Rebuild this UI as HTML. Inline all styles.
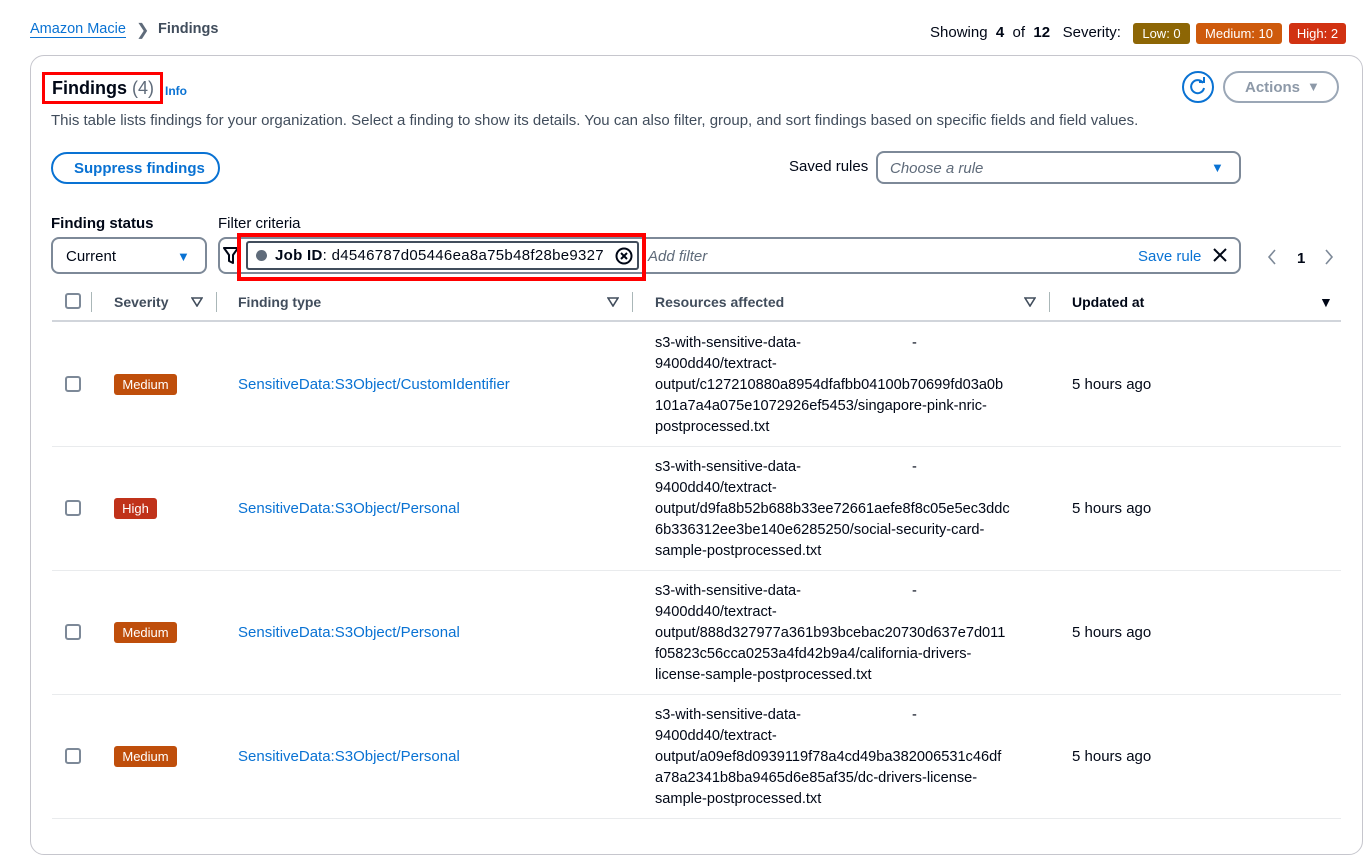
<!DOCTYPE html>
<html><head><meta charset="utf-8">
<style>
*{margin:0;padding:0;box-sizing:border-box}
body{width:1372px;height:819px;background:#fff;font-family:"Liberation Sans",sans-serif;color:#000716;position:relative;overflow:hidden;font-size:15px}
.a{position:absolute;white-space:nowrap}
.link{color:#0972d3}
.badge{position:absolute;color:#fff;font-size:13px;border-radius:3px;height:21px;line-height:21px;text-align:center}
.cb{position:absolute;width:16px;height:16px;border:2px solid #7d8998;border-radius:3px;background:#fff}
.sep{position:absolute;width:1px;height:20px;background:#aab7b8}
.hr{position:absolute;left:52px;width:1289px;height:1px;background:#e9ebed}
.res{position:absolute;left:655px;font-size:14.6px;line-height:21px;color:#000716;white-space:nowrap}
.b{font-weight:bold}
.h{font-size:14px}
</style></head><body>
<div class="a link" style="left:30px;top:21px;font-size:14.5px;border-bottom:1px solid #0972d3;line-height:16px">Amazon Macie</div>
<div class="a" style="left:136px;top:20px;color:#5f6b7a;font-size:16px">&#x276F;</div>
<div class="a b" style="left:158px;top:21px;color:#414d5c;font-size:14.5px">Findings</div>

<div class="a" style="left:930px;top:24px;font-size:15px">Showing&nbsp; <b>4</b> &nbsp;of&nbsp; <b>12</b> &nbsp;&nbsp;Severity:</div>
<div class="badge" style="left:1133px;top:23px;width:57px;background:#8d6605">Low: 0</div>
<div class="badge" style="left:1196px;top:23px;width:86px;background:#ce5a0c">Medium: 10</div>
<div class="badge" style="left:1289px;top:23px;width:57px;background:#d13212">High: 2</div>

<div style="position:absolute;left:30px;top:55px;width:1333px;height:800px;border:1px solid #c6c6cd;border-radius:14px"></div>

<div class="a" style="left:42px;top:72px;width:121px;height:32px;border:3px solid #f00"></div>
<div class="a b" style="left:52px;top:78px;font-size:18px">Findings <span style="font-weight:normal;color:#5f6b7a">(4)</span></div>
<div class="a link b" style="left:165px;top:84px;font-size:12px">Info</div>
<div class="a" style="left:51px;top:112px;font-size:15px;color:#414d5c">This table lists findings for your organization. Select a finding to show its details. You can also filter, group, and sort findings based on specific fields and field values.</div>

<div class="a" style="left:1182px;top:71px;width:32px;height:32px;border:2px solid #0972d3;border-radius:50%"></div>
<svg class="a" style="left:1188px;top:77px" width="20" height="20" viewBox="0 0 20 20"><path d="M15 6 A6.5 6.5 0 1 0 16 11" fill="none" stroke="#0972d3" stroke-width="2"/><path d="M11 5 L16 5 L16 0" fill="none" stroke="#0972d3" stroke-width="2"/></svg>
<div class="a" style="left:1223px;top:71px;width:116px;height:32px;border:2px solid #9ba7b6;border-radius:16px"></div>
<div class="a b" style="left:1245px;top:79px;color:#8d99a8;font-size:15px">Actions</div>
<div class="a" style="left:1307px;top:79px;color:#8d99a8;font-size:13px">&#9660;</div>

<div class="a" style="left:51px;top:152px;width:169px;height:32px;border:2px solid #0972d3;border-radius:16px"></div>
<div class="a b link" style="left:74px;top:160px;font-size:15px">Suppress findings</div>

<div class="a" style="left:789px;top:158px">Saved rules</div>
<div class="a" style="left:876px;top:151px;width:365px;height:33px;border:2px solid #7d8998;border-radius:8px"></div>
<div class="a" style="left:890px;top:160px;font-style:italic;color:#5f6b7a">Choose a rule</div>
<div class="a" style="left:1211px;top:160px;color:#0972d3;font-size:13px">&#9660;</div>

<div class="a b" style="left:51px;top:215px">Finding status</div>
<div class="a" style="left:218px;top:215px;color:#000716">Filter criteria</div>
<div class="a" style="left:51px;top:237px;width:156px;height:37px;border:2px solid #7d8998;border-radius:8px"></div>
<div class="a" style="left:66px;top:248px">Current</div>
<div class="a" style="left:177px;top:249px;color:#0972d3;font-size:13px">&#9660;</div>

<div class="a" style="left:218px;top:237px;width:1023px;height:37px;border:2px solid #7d8998;border-radius:8px"></div>
<svg class="a" style="left:223px;top:247px" width="16" height="18" viewBox="0 0 16 18"><path d="M1 1 H15 L10 8 V16 L6 14 V8 Z" fill="none" stroke="#000716" stroke-width="2" stroke-linejoin="round"/></svg>
<div class="a" style="left:246px;top:241px;width:393px;height:29px;border:2px solid #414d5c;border-radius:3px"></div>
<div class="a" style="left:237px;top:233px;width:409px;height:48px;border:4px solid #f00"></div>
<div class="a" style="left:256px;top:250px;width:11px;height:11px;border-radius:50%;background:#5f6b7a"></div>
<div class="a" style="left:275px;top:247px;font-size:15px;letter-spacing:0.3px"><b>Job ID</b>: d4546787d05446ea8a75b48f28be9327</div>
<svg class="a" style="left:614px;top:246px" width="20" height="20" viewBox="0 0 20 20"><circle cx="10" cy="10" r="7.5" fill="none" stroke="#000716" stroke-width="2"/><path d="M7 7 L13 13 M13 7 L7 13" stroke="#000716" stroke-width="2"/></svg>
<div class="a" style="left:648px;top:248px;font-style:italic;color:#5f6b7a">Add filter</div>
<div class="a link" style="left:1138px;top:248px">Save rule</div>
<svg class="a" style="left:1212px;top:247px" width="16" height="16" viewBox="0 0 16 16"><path d="M2 2 L14 14 M14 2 L2 14" stroke="#000716" stroke-width="2"/></svg>
<svg class="a" style="left:1266px;top:249px" width="12" height="16" viewBox="0 0 12 16"><path d="M9 1 L3 8 L9 15" fill="none" stroke="#7d8998" stroke-width="1.6"/></svg>
<div class="a b" style="left:1297px;top:250px">1</div>
<svg class="a" style="left:1323px;top:249px" width="12" height="16" viewBox="0 0 12 16"><path d="M3 1 L9 8 L3 15" fill="none" stroke="#7d8998" stroke-width="1.6"/></svg>

<!-- header -->
<div class="cb" style="left:65px;top:293px"></div>
<div class="sep" style="left:91px;top:292px"></div>
<div class="a b h" style="left:114px;top:294px;color:#414d5c">Severity</div>
<svg class="a" style="left:191px;top:297px" width="12" height="10" viewBox="0 0 12 10"><path d="M1 1 H11 L6 9 Z" fill="none" stroke="#414d5c" stroke-width="1.6"/></svg>
<div class="sep" style="left:216px;top:292px"></div>
<div class="a b h" style="left:238px;top:294px;color:#414d5c">Finding type</div>
<svg class="a" style="left:607px;top:297px" width="12" height="10" viewBox="0 0 12 10"><path d="M1 1 H11 L6 9 Z" fill="none" stroke="#414d5c" stroke-width="1.6"/></svg>
<div class="sep" style="left:632px;top:292px"></div>
<div class="a b h" style="left:655px;top:294px;color:#414d5c">Resources affected</div>
<svg class="a" style="left:1024px;top:297px" width="12" height="10" viewBox="0 0 12 10"><path d="M1 1 H11 L6 9 Z" fill="none" stroke="#414d5c" stroke-width="1.6"/></svg>
<div class="sep" style="left:1049px;top:292px"></div>
<div class="a b h" style="left:1072px;top:294px">Updated at</div>
<div class="a" style="left:1319px;top:294px;font-size:14px">&#9660;</div>
<div class="hr" style="top:320px;height:2px;background:#d1d5db"></div>

<!-- row 1 -->
<div class="cb" style="left:65px;top:376px"></div>
<div class="badge" style="left:114px;top:374px;width:63px;background:#bf4e0b">Medium</div>
<div class="a link" style="left:238px;top:376px">SensitiveData:S3Object/CustomIdentifier</div>
<div class="res" style="top:333px">s3-with-sensitive-data-<span style="position:absolute;left:257px">-</span><br>9400dd40/textract-<br>output/c127210880a8954dfafbb04100b70699fd03a0b<br>101a7a4a075e1072926ef5453/singapore-pink-nric-<br>postprocessed.txt</div>
<div class="a" style="left:1072px;top:376px">5 hours ago</div>
<div class="hr" style="top:446px"></div>

<!-- row 2 -->
<div class="cb" style="left:65px;top:500px"></div>
<div class="badge" style="left:114px;top:498px;width:43px;background:#c0321a">High</div>
<div class="a link" style="left:238px;top:500px">SensitiveData:S3Object/Personal</div>
<div class="res" style="top:457px">s3-with-sensitive-data-<span style="position:absolute;left:257px">-</span><br>9400dd40/textract-<br>output/d9fa8b52b688b33ee72661aefe8f8c05e5ec3ddc<br>6b336312ee3be140e6285250/social-security-card-<br>sample-postprocessed.txt</div>
<div class="a" style="left:1072px;top:500px">5 hours ago</div>
<div class="hr" style="top:570px"></div>

<!-- row 3 -->
<div class="cb" style="left:65px;top:624px"></div>
<div class="badge" style="left:114px;top:622px;width:63px;background:#bf4e0b">Medium</div>
<div class="a link" style="left:238px;top:624px">SensitiveData:S3Object/Personal</div>
<div class="res" style="top:581px">s3-with-sensitive-data-<span style="position:absolute;left:257px">-</span><br>9400dd40/textract-<br>output/888d327977a361b93bcebac20730d637e7d011<br>f05823c56cca0253a4fd42b9a4/california-drivers-<br>license-sample-postprocessed.txt</div>
<div class="a" style="left:1072px;top:624px">5 hours ago</div>
<div class="hr" style="top:694px"></div>

<!-- row 4 -->
<div class="cb" style="left:65px;top:748px"></div>
<div class="badge" style="left:114px;top:746px;width:63px;background:#bf4e0b">Medium</div>
<div class="a link" style="left:238px;top:748px">SensitiveData:S3Object/Personal</div>
<div class="res" style="top:705px">s3-with-sensitive-data-<span style="position:absolute;left:257px">-</span><br>9400dd40/textract-<br>output/a09ef8d0939119f78a4cd49ba382006531c46df<br>a78a2341b8ba9465d6e85af35/dc-drivers-license-<br>sample-postprocessed.txt</div>
<div class="a" style="left:1072px;top:748px">5 hours ago</div>
<div class="hr" style="top:818px"></div>
</body></html>
